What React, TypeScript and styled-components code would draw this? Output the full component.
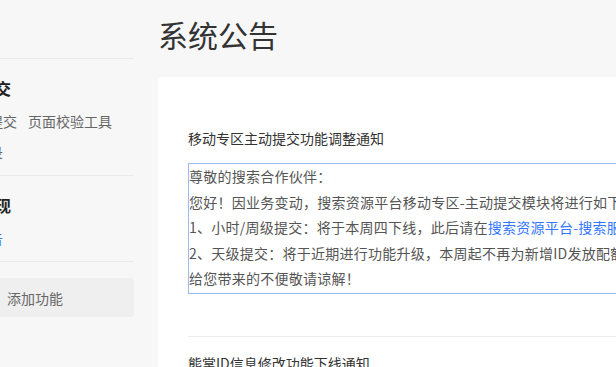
import React from 'react';
import styled, { createGlobalStyle } from 'styled-components';

const GlobalStyle = createGlobalStyle`
  html, body {
    margin: 0;
    padding: 0;
    overflow: hidden;
    background: #f7f7f7;
    font-family: "Noto Sans CJK SC", "Noto Sans", "Liberation Sans", sans-serif;
  }
`;

type NavItem = { label: string; active?: boolean };
type NavGroup = { title: string; rows: NavItem[][] };

const groups: NavGroup[] = [
  {
    title: '资源提交',
    rows: [
      [{ label: '死链接提交' }, { label: '页面校验工具' }],
      [{ label: '快速收录' }],
    ],
  },
  {
    title: '搜索展现',
    rows: [[{ label: '站点公告', active: true }]],
  },
];

export default function App() {
  return (
    <>
      <GlobalStyle />
      <Page>
        <Sidebar>
          <Nav>
            {groups.map((g) => (
              <Group key={g.title}>
                <GroupTitle>{g.title}</GroupTitle>
                <Rows>
                  {g.rows.map((row, i) => (
                    <Row key={i}>
                      {row.map((item) => (
                        <Item key={item.label} $active={item.active}>
                          {item.label}
                        </Item>
                      ))}
                    </Row>
                  ))}
                </Rows>
              </Group>
            ))}
            <Footer>
              <AddButton>添加功能</AddButton>
            </Footer>
          </Nav>
        </Sidebar>

        <Main>
          <PageTitle>系统公告</PageTitle>
          <Card>
            <Notice>
              <NoticeTitle>移动专区主动提交功能调整通知</NoticeTitle>
              <NoticeBody>
                <Line>尊敬的搜索合作伙伴：</Line>
                <Line>您好！因业务变动，搜索资源平台移动专区-主动提交模块将进行如下调整：</Line>
                <Line>
                  1、小时/周级提交：将于本周四下线，此后请在
                  <Link>搜索资源平台-搜索服务-资源提交-普通收录</Link>
                  中提交数据；
                </Line>
                <Line>2、天级提交：将于近期进行功能升级，本周起不再为新增ID发放配额，已有配额不受影响；</Line>
                <Line>给您带来的不便敬请谅解！</Line>
              </NoticeBody>
            </Notice>
            <Notice>
              <NoticeTitle>熊掌ID信息修改功能下线通知</NoticeTitle>
            </Notice>
          </Card>
        </Main>
      </Page>
    </>
  );
}

const Page = styled.div`
  display: flex;
  align-items: flex-start;
  gap: 24px;
  width: 1200px;
  height: 367px;
`;

const Sidebar = styled.aside`
  flex: none;
  width: 134px;
  overflow: hidden;
  padding-top: 58px;
`;

const Nav = styled.nav`
  margin-left: -53px;
`;

const Group = styled.div`
  border-top: 1px solid #ebebeb;
  padding: 17px 0 13px;
`;

const GroupTitle = styled.div`
  font-size: 16px;
  font-weight: 700;
  line-height: 24px;
  color: #222;
  margin-bottom: 11px;
  white-space: nowrap;
`;

const Rows = styled.div`
  display: flex;
  flex-direction: column;
  gap: 11px;
`;

const Row = styled.div`
  display: flex;
  gap: 11px;
  font-size: 14px;
  line-height: 20px;
  white-space: nowrap;
`;

const Item = styled.span<{ $active?: boolean }>`
  color: ${(p) => (p.$active ? '#3377ff' : '#666')};
`;

const Footer = styled.div`
  border-top: 1px solid #ebebeb;
  padding-top: 16px;
`;

const AddButton = styled.div`
  height: 39px;
  display: flex;
  align-items: center;
  padding-left: 60px;
  background: #efefef;
  border-radius: 4px;
  font-size: 14px;
  color: #666;
`;

const Main = styled.main`
  flex: 1;
  min-width: 0;
`;

const PageTitle = styled.h1`
  margin: 0;
  padding-top: 14px;
  font-size: 30px;
  font-weight: 400;
  line-height: 40px;
  color: #333;
  margin-bottom: 23px;
`;

const Card = styled.section`
  background: #fff;
  border-radius: 4px;
  padding: 35px 30px 0;
  min-height: 400px;
`;

const Notice = styled.article`
  padding: 16px 0 42px;

  & + & {
    border-top: 1px solid #eee;
  }
`;

const NoticeTitle = styled.h3`
  margin: 0 0 15px;
  font-size: 14px;
  font-weight: 400;
  line-height: 20px;
  color: #333;
`;

const NoticeBody = styled.div`
  border: 1px solid #9bbaf8;
  padding-bottom: 1px;
  font-size: 14px;
  line-height: 25.5px;
  letter-spacing: 0.25px;
  color: #555;
`;

const Line = styled.p`
  margin: 0;
  white-space: nowrap;
`;

const Link = styled.a`
  color: #3377ff;
  text-decoration: none;
  cursor: pointer;
`;
